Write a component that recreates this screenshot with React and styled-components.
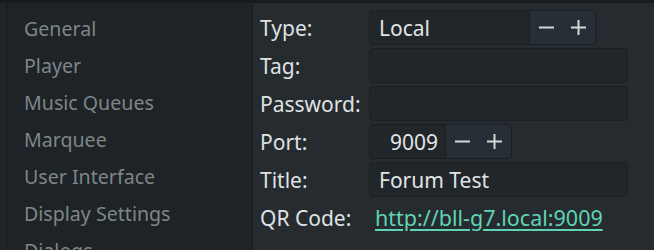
import React from "react";
import styled, { createGlobalStyle } from "styled-components";

const Global = createGlobalStyle`
  html, body {
    margin: 0;
    padding: 0;
    background: #1f2528;
    overflow: hidden;
  }
  body {
    font-family: "Noto Sans", "DejaVu Sans", sans-serif;
  }
`

const Window = styled.div`
  width: 654px;
  height: 250px;
  display: flex;
  flex-direction: column;
  background: #1f2528;
  border-top: 3px solid #171b1e;
  box-sizing: border-box;
  overflow: hidden;
`

const Body = styled.div`
  flex: 1;
  display: flex;
  padding-left: 6px;
  min-height: 0;
`

const Sidebar = styled.div`
  width: 247px;
  flex-shrink: 0;
  background: #1d2326;
  border-left: 1px solid #171b1e;
  border-right: 1px solid #171b1e;
  box-sizing: border-box;
  padding: 7px 0 0 17px;
  display: flex;
  flex-direction: column;
`

const NavItem = styled.div`
  height: 37px;
  line-height: 37px;
  font-size: 19.6px;
  color: #7f8588;
  white-space: nowrap;
`

const Panel = styled.div`
  flex: 1;
  background: #252b2f;
  padding: 7px 26px 0 7px;
  display: grid;
  grid-template-columns: 109px 1fr;
  grid-auto-rows: 35px;
  row-gap: 3px;
  align-content: start;
`

const Label = styled.div`
  font-size: 21px;
  color: #dfe2e3;
  display: flex;
  align-items: center;
  white-space: nowrap;
`

const Field = styled.div`
  display: flex;
  align-items: center;
  width: ${p => p.width || "100%"};
  height: 35px;
  box-sizing: border-box;
  background: #20262a;
  border: 1px solid #1a1f22;
  border-radius: 4px;
  overflow: hidden;
`

const FieldText = styled.div`
  flex: 1;
  padding: 0 ${p => p.right ? "7px" : "9px"};
  text-align: ${p => p.right ? "right" : "left"};
  font-size: 21px;
  color: #e1e3e4;
  white-space: nowrap;
`

const Steppers = styled.div`
  display: flex;
  height: 100%;
  width: 66px;
  flex-shrink: 0;
  background: #272e35;
  border-left: 1px solid #1a1f22;
  box-sizing: border-box;
`

const StepButton = styled.div`
  flex: 1;
  display: flex;
  align-items: center;
  justify-content: center;
`

const LinkText = styled.a`
  display: flex;
  align-items: center;
  padding-left: 6px;
  font-size: 21.5px;
  color: #5fd4b4;
  text-decoration: underline;
  text-underline-offset: 3px;
  white-space: nowrap;
`

const Minus = () => (
  <svg width="15" height="15" viewBox="0 0 15 15">
    <rect x="0" y="6.5" width="15" height="2" fill="#d4d8d6" />
  </svg>
)

const Plus = () => (
  <svg width="15" height="15" viewBox="0 0 15 15">
    <rect x="0" y="6.5" width="15" height="2" fill="#d4d8d6" />
    <rect x="6.5" y="0" width="2" height="15" fill="#d4d8d6" />
  </svg>
)

const Spin = () => (
  <Steppers>
    <StepButton><Minus /></StepButton>
    <StepButton><Plus /></StepButton>
  </Steppers>
)

const NAV = ["General", "Player", "Music Queues", "Marquee", "User Interface", "Display Settings", "Dialogs"]

export default function App() {
  return (
    <Window>
      <Global />
      <Body>
        <Sidebar>
          {NAV.map(n => <NavItem key={n}>{n}</NavItem>)}
        </Sidebar>
        <Panel>
          <Label>Type:</Label>
          <Field width="227px">
            <FieldText>Local</FieldText>
            <Spin />
          </Field>
          <Label>Tag:</Label>
          <Field />
          <Label>Password:</Label>
          <Field />
          <Label>Port:</Label>
          <Field width="143px">
            <FieldText right>9009</FieldText>
            <Spin />
          </Field>
          <Label>Title:</Label>
          <Field>
            <FieldText>Forum Test</FieldText>
          </Field>
          <Label>QR Code:</Label>
          <LinkText href="#">http://bll-g7.local:9009</LinkText>
        </Panel>
      </Body>
    </Window>
  )
}
